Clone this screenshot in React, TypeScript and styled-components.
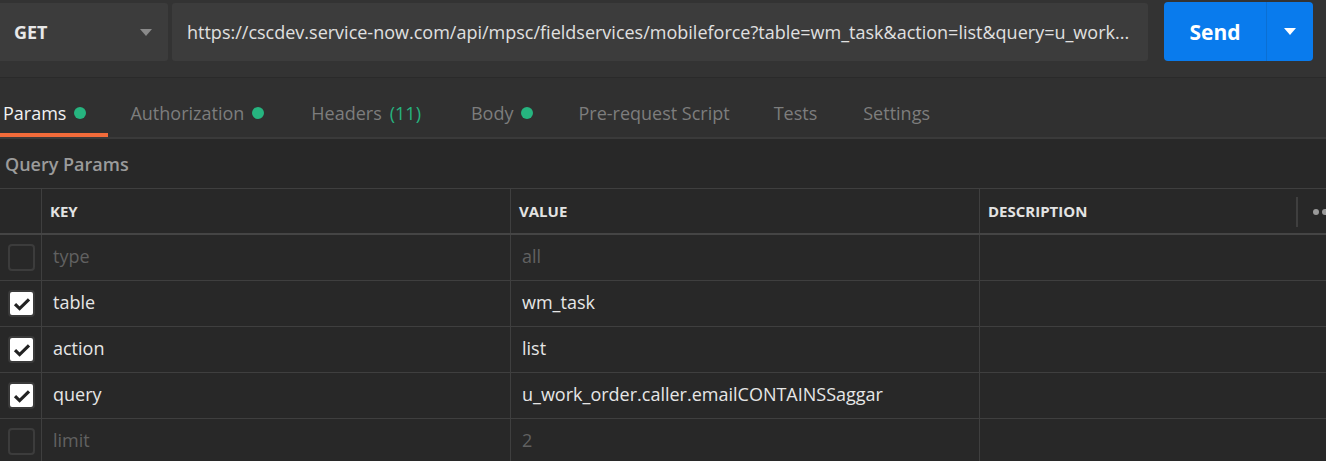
import React from "react";
import styled, { createGlobalStyle } from "styled-components";

const Global = createGlobalStyle`
  html, body { margin: 0; padding: 0; background: #282828; }
  body { font-family: "Open Sans", "Noto Sans", sans-serif; overflow: hidden; }
  * { box-sizing: border-box; }
`;

const Page = styled.div`
  width: 1326px;
  height: 461px;
  overflow: hidden;
  background: #282828;
  display: flex;
  flex-direction: column;
  & > * { flex: none; }
`;

const TopBar = styled.div`
  height: 78px;
  background: #333333;
  border-bottom: 1px solid #2a2a2a;
  padding: 3px 13px 0 0;
  display: flex;
  align-items: flex-start;
`;

const RequestBox = styled.div`
  flex: 1;
  height: 58px;
  display: flex;
  gap: 4px;
  margin-right: 16px;
`;

const MethodSelect = styled.div`
  width: 168px;
  background: #3c3c3c;
  border-radius: 0 3px 3px 0;
  display: flex;
  align-items: center;
  justify-content: space-between;
  padding: 0 16px 0 14px;
  color: #e8e8e8;
  font-weight: 700;
  font-size: 18px;
`;

const Caret = styled.span<{ $color: string }>`
  width: 0;
  height: 0;
  border-left: 6px solid transparent;
  border-right: 6px solid transparent;
  border-top: 7px solid ${(p) => p.$color};
`;

const UrlInput = styled.div`
  flex: 1;
  background: #3c3c3c;
  border-radius: 3px;
  display: flex;
  align-items: center;
  padding: 0 16px 0 15px;
  color: #e0e0e0;
  font-size: 18px;
  white-space: nowrap;
  overflow: hidden;
`;

const SendButton = styled.div`
  width: 149px;
  height: 59px;
  margin-top: -1px;
  background: #097bed;
  border-radius: 4px;
  display: flex;
  color: #ffffff;
`;

const SendLabel = styled.div`
  width: 103px;
  display: flex;
  align-items: center;
  justify-content: center;
  font-weight: 700;
  font-size: 21px;
  border-right: 1px solid #0b6fd3;
`;

const SendArrow = styled.div`
  flex: 1;
  display: flex;
  align-items: center;
  justify-content: center;
`;

const Tabs = styled.div`
  height: 61px;
  background: #303030;
  border-bottom: 2px solid #3a3a3a;
  display: flex;
  align-items: stretch;
`;

const Tab = styled.div<{ $active?: boolean; $first?: boolean; $extra?: number }>`
  position: relative;
  display: flex;
  align-items: center;
  gap: 8px;
  padding: 10px ${(p) => 22 + (p.$extra || 0)}px 0 ${(p) => (p.$first ? "3px" : "22px")};
  font-size: 18px;
  color: ${(p) => (p.$active ? "#f2f2f2" : "#7d7d7d")};
  white-space: nowrap;
  &::after {
    content: "";
    position: absolute;
    left: 0;
    right: 0;
    bottom: 0;
    height: 4px;
    background: ${(p) => (p.$active ? "#f26b3a" : "transparent")};
  }
`;

const Dot = styled.span`
  width: 12px;
  height: 12px;
  border-radius: 50%;
  background: #26b47f;
`;

const Count = styled.span`
  color: #26b47f;
`;

const SectionTitle = styled.div`
  height: 49px;
  display: flex;
  align-items: center;
  padding-left: 5px;
  color: #9b9b9b;
  font-weight: 600;
  font-size: 18px;
`;

const Table = styled.div`
  border-top: 1px solid #3f3f3f;
`;

const Row = styled.div<{ $header?: boolean }>`
  display: grid;
  grid-template-columns: 41px 469px 469px 1fr;
  height: 46px;
  border-bottom: ${(p) => (p.$header ? "2px solid #454545" : "1px solid #3f3f3f")};
`;

const Cell = styled.div<{ $muted?: boolean }>`
  display: flex;
  align-items: center;
  padding: 0 0 3px 11px;
  border-left: 1px solid #3f3f3f;
  font-size: 18px;
  color: ${(p) => (p.$muted ? "#616161" : "#e6e6e6")};
  white-space: nowrap;
  &:first-child {
    border-left: none;
    padding: 0 0 0 8px;
  }
`;

const HeadCell = styled(Cell)`
  font-size: 15px;
  font-weight: 700;
  color: #e3e3e3;
  padding: 0 0 0 8px;
`;

const DescHead = styled(HeadCell)`
  position: relative;
`;

const HeadTools = styled.div`
  position: absolute;
  top: 8px;
  bottom: 6px;
  right: 0;
  width: 30px;
  border-left: 2px solid #3f3f3f;
  display: flex;
  align-items: center;
  gap: 3px;
  padding-left: 15px;
`;

const SmallDot = styled.span`
  width: 6px;
  height: 6px;
  border-radius: 50%;
  background: #9a9a9a;
  flex: none;
`;

const Check = styled.div<{ $checked?: boolean }>`
  width: 27px;
  height: 27px;
  border-radius: 4px;
  border: 2px solid ${(p) => (p.$checked ? "#3a3a3a" : "#3c3c3c")};
  background: ${(p) => (p.$checked ? "#ffffff" : "transparent")};
  display: flex;
  align-items: center;
  justify-content: center;
`;

const rows = [
  { key: "type", value: "all", on: false },
  { key: "table", value: "wm_task", on: true },
  { key: "action", value: "list", on: true },
  { key: "query", value: "u_work_order.caller.emailCONTAINSSaggar", on: true },
  { key: "limit", value: "2", on: false },
];

const CheckMark = () => (
  <svg width="18" height="14" viewBox="0 0 18 14">
    <path d="M2 7.2 L6.6 11.6 L16 2.4" fill="none" stroke="#222" strokeWidth="3.2" />
  </svg>
);

export default function App() {
  return (
    <Page>
      <Global />
      <TopBar>
        <RequestBox>
          <MethodSelect>
            GET
            <Caret $color="#8a8a8a" />
          </MethodSelect>
          <UrlInput>
            https://cscdev.service-now.com/api/mpsc/fieldservices/mobileforce?table=wm_task&amp;action=list&amp;query=u_work...
          </UrlInput>
        </RequestBox>
        <SendButton>
          <SendLabel>Send</SendLabel>
          <SendArrow>
            <Caret $color="#ffffff" />
          </SendArrow>
        </SendButton>
      </TopBar>
      <Tabs>
        <Tab $active $first>
          Params <Dot />
        </Tab>
        <Tab $extra={3}>
          Authorization <Dot />
        </Tab>
        <Tab $extra={6}>
          Headers <Count>(11)</Count>
        </Tab>
        <Tab $extra={1}>
          Body <Dot />
        </Tab>
        <Tab>Pre-request Script</Tab>
        <Tab $extra={2}>Tests</Tab>
        <Tab>Settings</Tab>
      </Tabs>
      <SectionTitle>Query Params</SectionTitle>
      <Table>
        <Row $header>
          <HeadCell />
          <HeadCell>KEY</HeadCell>
          <HeadCell>VALUE</HeadCell>
          <DescHead>
            DESCRIPTION
            <HeadTools>
              <SmallDot />
              <SmallDot />
            </HeadTools>
          </DescHead>
        </Row>
        {rows.map((r) => (
          <Row key={r.key}>
            <Cell>
              <Check $checked={r.on}>{r.on && <CheckMark />}</Check>
            </Cell>
            <Cell $muted={!r.on}>{r.key}</Cell>
            <Cell $muted={!r.on}>{r.value}</Cell>
            <Cell />
          </Row>
        ))}
      </Table>
    </Page>
  );
}
